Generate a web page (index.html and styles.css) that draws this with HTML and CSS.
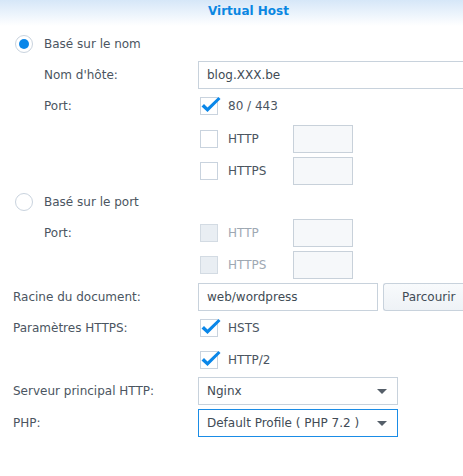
FILE: index.html
```html
<!DOCTYPE html>
<html lang="fr">
<head>
<meta charset="utf-8">
<title>Virtual Host</title>
<link rel="stylesheet" href="styles.css">
</head>
<body>
<div class="header"><span class="title">Virtual Host</span></div>
<div class="form">
  <div class="row">
    <span class="radio checked"></span><span class="radio-label">Basé sur le nom</span>
  </div>
  <div class="row">
    <span class="label indent">Nom d'hôte:</span>
    <span class="input wide">blog.XXX.be</span>
  </div>
  <div class="row">
    <span class="label indent">Port:</span>
    <span class="check on"><svg viewBox="0 0 18 18" class="tick"><path d="M1.5 9.5 L4 7 L7.5 10.5 L18.5 0 L20.5 2 L7.5 15 Z"/></svg></span>
    <span class="opt">80 / 443</span>
  </div>
  <div class="row mt2">
    <span class="label"></span>
    <span class="check"></span><span class="opt">HTTP</span>
    <span class="port"></span>
  </div>
  <div class="row mt1">
    <span class="label"></span>
    <span class="check"></span><span class="opt">HTTPS</span>
    <span class="port"></span>
  </div>
  <div class="row">
    <span class="radio"></span><span class="radio-label">Basé sur le port</span>
  </div>
  <div class="row">
    <span class="label indent">Port:</span>
    <span class="check disabled"></span><span class="opt disabled">HTTP</span>
    <span class="port"></span>
  </div>
  <div class="row mt1">
    <span class="label"></span>
    <span class="check disabled"></span><span class="opt disabled">HTTPS</span>
    <span class="port"></span>
  </div>
  <div class="row mt1">
    <span class="label">Racine du document:</span>
    <span class="input doc">web/wordpress</span>
    <span class="button">Parcourir</span>
  </div>
  <div class="row">
    <span class="label">Paramètres HTTPS:</span>
    <span class="check on"><svg viewBox="0 0 18 18" class="tick"><path d="M1.5 9.5 L4 7 L7.5 10.5 L18.5 0 L20.5 2 L7.5 15 Z"/></svg></span>
    <span class="opt">HSTS</span>
  </div>
  <div class="row mt1">
    <span class="label"></span>
    <span class="check on"><svg viewBox="0 0 18 18" class="tick"><path d="M1.5 9.5 L4 7 L7.5 10.5 L18.5 0 L20.5 2 L7.5 15 Z"/></svg></span>
    <span class="opt">HTTP/2</span>
  </div>
  <div class="row">
    <span class="label">Serveur principal HTTP:</span>
    <span class="select">Nginx<span class="arrow"></span></span>
  </div>
  <div class="row mt1">
    <span class="label">PHP:</span>
    <span class="select focus">Default Profile ( PHP 7.2 )<span class="arrow"></span></span>
  </div>
</div>
</body>
</html>
```
FILE: styles.css
```css
html, body {
  margin: 0;
  padding: 0;
  overflow: hidden;
  background: #fff;
}
body {
  font-family: "DejaVu Sans", Verdana, sans-serif;
  font-size: 12px;
  color: #4b5561;
  width: 463px;
  height: 476px;
}
* { box-sizing: border-box; }

.header {
  height: 26px;
  line-height: 22px;
  padding-left: 34px;
  text-align: center;
  background: linear-gradient(to bottom, #d6e7f8 0px, #ecf4fc 14px, #ffffff 26px);
}
.title {
  font-weight: bold;
  color: #0a87e2;
}

.form {
  display: flex;
  flex-direction: column;
  gap: 3px;
  padding: 4px 0 0 13px;
}
.row {
  display: flex;
  align-items: center;
  height: 28px;
  flex: none;
}
.mt1 { margin-top: 1px; }
.mt2 { margin-top: 2px; }

.label {
  width: 185px;
  flex: none;
}
.label.indent { padding-left: 31px; }

.radio {
  width: 18px;
  height: 18px;
  margin-left: 2px;
  border: 1px solid #c9d3de;
  border-radius: 50%;
  background: #fff;
  display: flex;
  align-items: center;
  justify-content: center;
  flex: none;
}
.radio.checked::after {
  content: "";
  width: 10px;
  height: 10px;
  border-radius: 50%;
  background: #0a87e9;
}
.radio-label { margin-left: 11px; }

.input {
  height: 28px;
  border: 1px solid #c8d2dc;
  background: #fff;
  color: #414b55;
  padding-left: 8px;
  display: flex;
  align-items: center;
  flex: none;
}
.input.wide {
  width: 265px;
  border-right: 0;
}
.input.doc { width: 180px; }

.button {
  margin-left: 5px;
  height: 28px;
  width: 80px;
  flex: none;
  border: 1px solid #c8d2dc;
  border-right: 0;
  border-radius: 3px 0 0 3px;
  background: linear-gradient(to bottom, #f8fafc, #eef2f6);
  color: #414b55;
  padding-left: 18px;
  display: flex;
  align-items: center;
}

.check {
  position: relative;
  width: 18px;
  height: 18px;
  margin-left: 2px;
  border: 1px solid #c9d3de;
  background: #fff;
  flex: none;
}
.check.disabled {
  background: #e9eef3;
  border-color: #d3dbe3;
}
.tick {
  position: absolute;
  left: -1px;
  top: -1px;
  width: 18px;
  height: 18px;
  overflow: visible;
  fill: #0a87e9;
}
.opt {
  width: 75px;
  padding-left: 10px;
  flex: none;
}
.opt.disabled { color: #9ea8b3; }

.port {
  width: 60px;
  height: 28px;
  border: 1px solid #c8d1da;
  background: #f6f8fa;
  flex: none;
}

.select {
  position: relative;
  width: 200px;
  height: 28px;
  border: 1px solid #c8d2dc;
  background: #fff;
  color: #414b55;
  padding-left: 8px;
  display: flex;
  align-items: center;
  flex: none;
}
.select.focus { border-color: #1a8ce6; }
.arrow {
  position: absolute;
  right: 10px;
  top: 11px;
  width: 0;
  height: 0;
  border-left: 5px solid transparent;
  border-right: 5px solid transparent;
  border-top: 5px solid #555f69;
}
```
